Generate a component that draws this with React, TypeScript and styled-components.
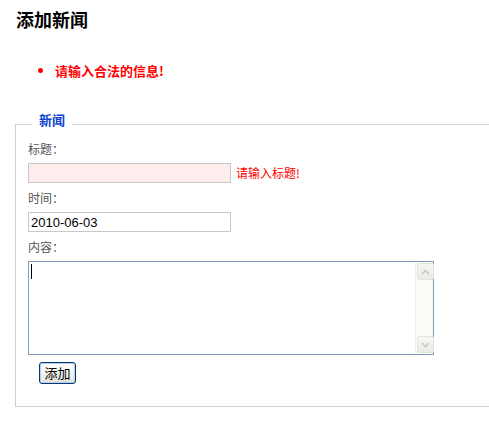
import React from 'react';
import styled, { createGlobalStyle } from 'styled-components';

const GlobalStyle = createGlobalStyle`
  html, body {
    margin: 0;
    padding: 0;
    background: #fff;
  }
  body {
    font-family: "Noto Sans CJK SC", "Liberation Sans", sans-serif;
    font-size: 12px;
  }
`;

const Page = styled.div`
  padding: 8px 0 0 15px;
  overflow: hidden;
  height: 423px;
  box-sizing: border-box;
`;

const Title = styled.h2`
  margin: 0 0 0 1px;
  font-size: 18px;
  line-height: 22px;
  font-weight: bold;
  color: #000;
`;

const ErrorList = styled.ul`
  margin: 33px 0 0;
  padding-left: 40px;
  color: #f00;
  font-size: 13px;
  line-height: 16px;
  font-weight: bold;
  list-style: disc;
`;

const FieldSet = styled.fieldset`
  margin: 33px 0 0;
  width: 520px;
  padding: 4px 12px 22px;
  border: 1px solid #d0d0d0;
  box-sizing: border-box;
`;

const Legend = styled.legend`
  margin-left: 4px;
  padding: 0 7px 8px;
  font-size: 13px;
  line-height: 16px;
  font-weight: bold;
  color: #0a3fcf;
`;

const Label = styled.label<{ $first?: boolean }>`
  display: block;
  margin-top: ${({ $first }) => ($first ? '0' : '6px')};
  font-size: 12px;
  line-height: 18px;
  color: #555;
`;

const Row = styled.div`
  display: flex;
  align-items: center;
  gap: 5px;
  margin-top: 5px;
`;

const TextInput = styled.input<{ $invalid?: boolean }>`
  width: 203px;
  height: 20px;
  box-sizing: border-box;
  margin: 0;
  padding: 0 2px;
  border: 1px solid #c8c8c8;
  background: ${({ $invalid }) => ($invalid ? '#fdeded' : '#fff')};
  font-family: "Liberation Sans", Arial, sans-serif;
  font-size: 13px;
  color: #000;
  outline: none;
`;

const FieldError = styled.span`
  color: #f00;
  font-size: 12px;
  line-height: 16px;
`;

const AreaBox = styled.div`
  position: relative;
  display: flex;
  width: 406px;
  height: 94px;
  box-sizing: border-box;
  margin-top: 5px;
  border: 1px solid #7f9db9;
  background: #fff;
`;

const TextArea = styled.textarea`
  flex: 1;
  margin: 0;
  padding: 2px 2px;
  border: none;
  resize: none;
  outline: none;
  overflow: hidden;
  font-family: "Liberation Sans", Arial, sans-serif;
  font-size: 13px;
  caret-color: #000;
`;

const Caret = styled.span`
  position: absolute;
  left: 2px;
  top: 2px;
  width: 1px;
  height: 15px;
  background: #000;
  pointer-events: none;
`;

const ScrollBar = styled.div`
  display: flex;
  flex-direction: column;
  width: 17px;
  padding: 1px 0;
  background: #fbfbf7;
  border-left: 1px solid #f3f3ee;
`;

const ScrollButton = styled.div`
  display: flex;
  align-items: center;
  justify-content: center;
  width: 15px;
  height: 15px;
  margin: 0 1px;
  border: 1px solid #e4e4de;
  border-radius: 2px;
  background: linear-gradient(#f6f6f2, #ecece6);
`;

const Track = styled.div`
  flex: 1;
`;

const SubmitButton = styled.button`
  display: block;
  margin: 7px 0 0 11px;
  width: 37px;
  height: 22px;
  padding: 0;
  border: 1px solid #003c74;
  border-radius: 3px;
  background: linear-gradient(#ffffff, #f2f1ea 60%, #e3e0d3);
  box-shadow: inset 0 0 0 1px #b9cdf0;
  font-family: "Noto Sans CJK SC", sans-serif;
  font-size: 13px;
  line-height: 18px;
  color: #000;
`;

const Chevron = ({ up }: { up?: boolean }) => (
  <svg width="9" height="6" viewBox="0 0 9 6">
    <path
      d={up ? 'M1 5 L4.5 1.5 L8 5' : 'M1 1 L4.5 4.5 L8 1'}
      fill="none"
      stroke="#c9c9c2"
      strokeWidth="1.6"
    />
  </svg>
);

export default function App() {
  return (
    <Page>
      <GlobalStyle />
      <Title>添加新闻</Title>
      <ErrorList>
        <li>请输入合法的信息!</li>
      </ErrorList>
      <FieldSet>
        <Legend>新闻</Legend>
        <Label $first>标题：</Label>
        <Row>
          <TextInput $invalid defaultValue="" />
          <FieldError>请输入标题!</FieldError>
        </Row>
        <Label>时间：</Label>
        <Row>
          <TextInput defaultValue="2010-06-03" />
        </Row>
        <Label>内容：</Label>
        <AreaBox>
          <TextArea />
          <Caret />
          <ScrollBar>
            <ScrollButton>
              <Chevron up />
            </ScrollButton>
            <Track />
            <ScrollButton>
              <Chevron />
            </ScrollButton>
          </ScrollBar>
        </AreaBox>
        <SubmitButton type="button">添加</SubmitButton>
      </FieldSet>
    </Page>
  );
}
